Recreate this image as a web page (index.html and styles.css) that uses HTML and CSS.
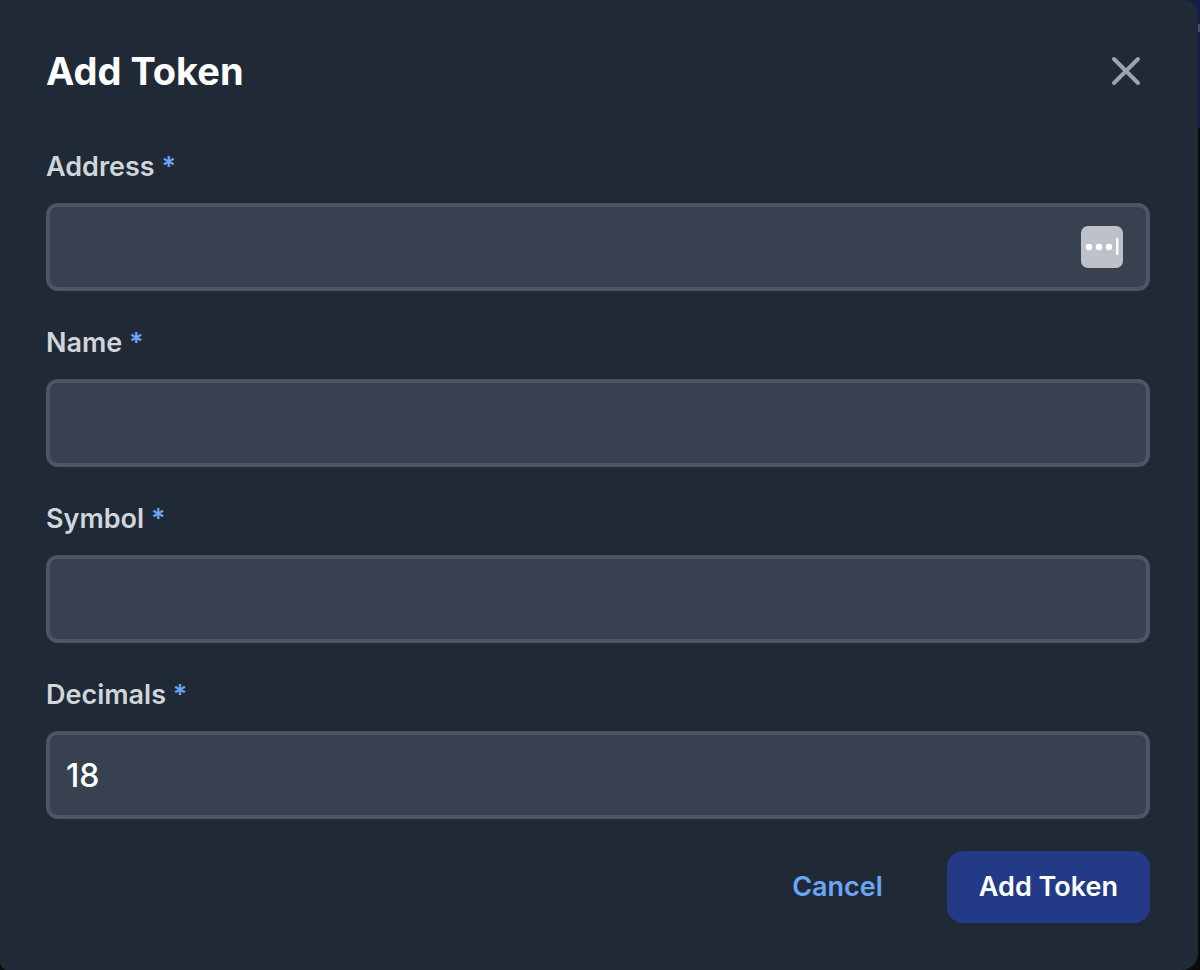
FILE: index.html
```html
<!DOCTYPE html>
<html lang="en">
<head>
  <meta charset="utf-8">
  <title>Add Token</title>
  <link rel="stylesheet" href="styles.css">
</head>
<body>
  <form class="modal">
    <div class="modal-header">
      <h1 class="modal-title">Add Token</h1>
      <button type="button" class="close-button" aria-label="Close">
        <svg width="48" height="48" viewBox="0 0 48 48">
          <path d="M12 12L36 36M36 12L12 36" fill="none" stroke="currentColor" stroke-width="4" stroke-linecap="round"/>
        </svg>
      </button>
    </div>

    <div class="fields">
      <div class="field">
        <label for="address">Address <span class="required">*</span></label>
        <div class="input-wrap">
          <input type="text" id="address">
          <!-- password manager badge -->
          <svg class="fill-badge" width="42" height="42" viewBox="0 0 42 42">
            <rect width="42" height="42" rx="7" fill="#bcc1ca"/>
            <circle cx="8" cy="21" r="3.2" fill="#fff"/>
            <circle cx="18" cy="21" r="3.2" fill="#fff"/>
            <circle cx="28" cy="21" r="3.2" fill="#fff"/>
            <rect x="35" y="12" width="2.4" height="17" rx="1" fill="#fff"/>
          </svg>
        </div>
      </div>
      <div class="field">
        <label for="name">Name <span class="required">*</span></label>
        <input type="text" id="name">
      </div>
      <div class="field">
        <label for="symbol">Symbol <span class="required">*</span></label>
        <input type="text" id="symbol">
      </div>
      <div class="field">
        <label for="decimals">Decimals <span class="required">*</span></label>
        <input type="text" id="decimals" value="18">
      </div>
    </div>

    <div class="actions">
      <button type="button" class="btn btn-cancel">Cancel</button>
      <button type="submit" class="btn btn-primary">Add Token</button>
    </div>
  </form>
</body>
</html>
```
FILE: styles.css
```css
* {
  box-sizing: border-box;
}
body {
  margin: 0;
  padding-right: 2px;
  font-family: Inter, "Liberation Sans", sans-serif;
  background: linear-gradient(#141d4d 24px, #4b4f63 24px, #4b4f63 32px, #141d4d 32px, #141d4d 128px, #0a0a0a 128px) no-repeat #0a0a0a;
}
.modal {
  padding: 47px 48px 47px 46px;
  background: #202a36;
  border-radius: 4px 14px 16px 8px;
}
.modal-header {
  display: flex;
  justify-content: space-between;
  align-items: center;
  margin-bottom: 52px;
}
.modal-title {
  margin: 0;
  font-size: 38px;
  font-weight: 700;
  line-height: 48px;
  color: #fff;
}
.close-button {
  display: block;
  padding: 0;
  border: none;
  background: none;
  color: #9ca3af;
  cursor: pointer;
}
.close-button svg {
  display: block;
}
.fields {
  display: flex;
  flex-direction: column;
  gap: 32px;
}
.field {
  display: flex;
  flex-direction: column;
  gap: 16px;
}
label {
  font-size: 27px;
  font-weight: 600;
  line-height: 40px;
  color: #d1d5db;
}
.required {
  color: #6ba5f8;
}
.input-wrap {
  position: relative;
}
input {
  display: block;
  width: 100%;
  height: 88px;
  padding: 0 16px;
  border: 4px solid #4b5563;
  border-radius: 12px;
  background: #384150;
  color: #fff;
  font-family: inherit;
  font-size: 32px;
  font-weight: 500;
}
.fill-badge {
  position: absolute;
  top: 23px;
  right: 27px;
}
.actions {
  display: flex;
  justify-content: flex-end;
  gap: 32px;
  margin-top: 32px;
}
.btn {
  padding: 16px 32px;
  border: none;
  border-radius: 16px;
  font-family: inherit;
  font-size: 27px;
  font-weight: 600;
  line-height: 40px;
  cursor: pointer;
}
.btn-cancel {
  background: none;
  color: #6ba5f8;
}
.btn-primary {
  background: #233b87;
  color: #fff;
}
```
